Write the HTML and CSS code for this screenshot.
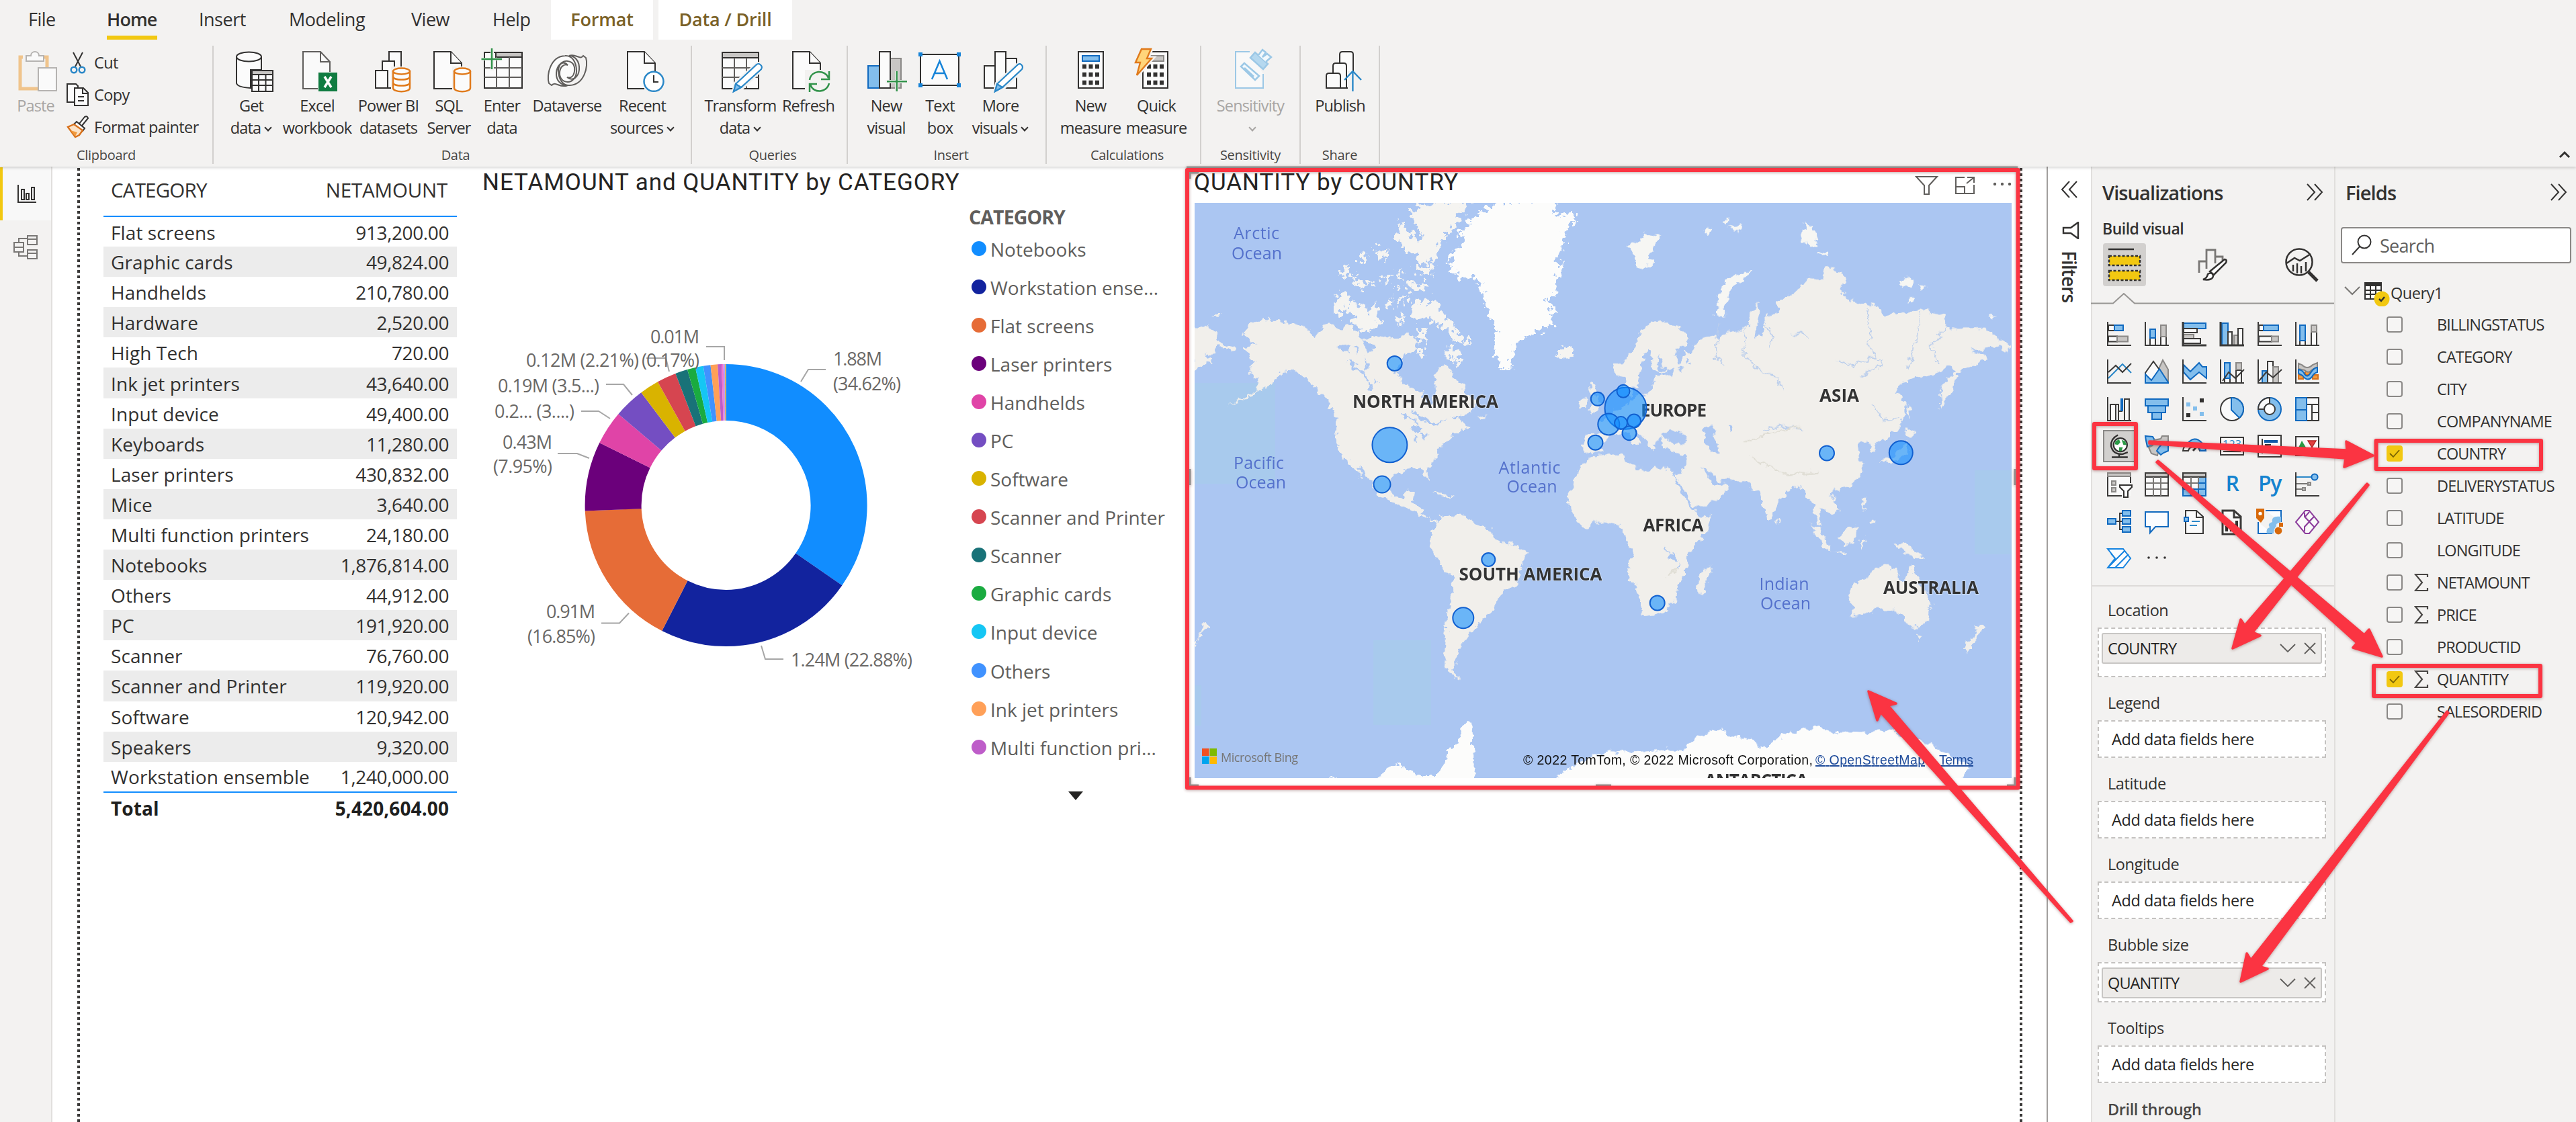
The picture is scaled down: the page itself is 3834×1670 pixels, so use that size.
FILE: index.html
```html
<!DOCTYPE html>
<html lang="en">
<head>
<meta charset="utf-8">
<title>Sales report - Power BI Desktop</title>
<link rel="stylesheet" href="styles.css">
</head>
<body>
<header class="ribbon">
  <nav class="tabs">
    <span class="tab file">File</span><span class="tab home">Home</span><span class="tab insert">Insert</span><span class="tab modeling">Modeling</span><span class="tab view">View</span><span class="tab help">Help</span><span class="tab ctx format">Format</span><span class="tab ctx drill">Data / Drill</span>
  </nav>
  <div class="groups">
    <section class="group g-clip">
      <div class="tools">
        <div class="btn off b-paste">
          <svg class="ri" viewBox="0 0 70 70"><path d="M16 15H12V62H38" stroke="#f0c48c" fill="none" stroke-width="5"/><path d="M46 15H52V30" stroke="#f0c48c" fill="none" stroke-width="5"/><path d="M21 21V13h7c0-8 12-8 12 0h7v8z" fill="#fafafa" stroke="#b5b3b1" stroke-width="2"/><path d="M39 31H66V65H39z" fill="#fafafa" stroke="#b5b3b1" stroke-width="2"/></svg>
          <span>Paste</span>
        </div>
        <div class="clip-list">
          <div class="mini"><svg viewBox="0 0 34 34"><path d="M10 2L21 23M24 2L13 23" class="k n"/><circle cx="11" cy="28" r="4.3" class="bl n"/><circle cx="23" cy="28" r="4.3" class="bl n"/></svg><span>Cut</span></div>
          <div class="mini"><svg viewBox="0 0 34 34"><path d="M1 1H14L17 4V28H1z" class="k"/><path d="M12 7H25L32 14V33H12z" class="k"/><path d="M24 8V15H31M17 20H26M17 26H26" class="k n"/></svg><span>Copy</span></div>
          <div class="mini"><svg viewBox="0 0 34 34"><path d="M19 12L27 2Q31 0 32 4L23 15" class="k"/><path d="M15 9L27 19L24 23L11 13z" class="k"/><path d="M11 13L2 17L13 32L19 29L24 22z" fill="#fbe3c8" stroke="#d8711b" stroke-width="2.4"/><path d="M6 22L16 25L13 31z" fill="#f09a3e"/></svg><span>Format painter</span></div>
        </div>
      </div>
      <div class="gname">Clipboard</div>
    </section>
    <section class="group g-data">
      <div class="tools">
        <div class="btn w92"><svg class="ri" viewBox="0 0 70 70"><path d="M13 14V54Q15 60 34 61V34H50V14" class="k"/><ellipse cx="31.5" cy="14.5" rx="18.5" ry="7" class="k"/><path d="M36 35H67V66H36z" class="k"/><path d="M36 35H67V41H36z" fill="#c8c6c4" class="k2"/><path d="M46 41V66M56.500 41V66M36 49H67M36 57H67" class="k n"/></svg><span>Get<br>data<i class="dn"></i></span></div>
        <div class="btn w104"><svg class="ri" viewBox="0 0 70 70"><path d="M14 7H40L54 22V37H36V62H14z" fill="#fafafa"/><path d="M36 62H14V7H40L54 22V37M40 7V22H54" class="gr n"/><path d="M37 38H65V66H37z" fill="#107c41"/><path d="M46 44L56 60M56 44L46 60" stroke="#fff" stroke-width="3.500" fill="none"/></svg><span>Excel<br>workbook</span></div>
        <div class="btn w108"><svg class="ri" viewBox="0 0 70 70"><path d="M36 7H54V60H36z" class="k"/><path d="M26 21H44V61H26z" class="k"/><path d="M16 35H34V61H16z" class="k"/><path d="M39 29H70V68H39z" fill="#f3f2f1"/><path d="M42 36V61C42 68 67 68 67 61V36" class="or"/><ellipse cx="54.500" cy="36" rx="12.500" ry="4.500" class="or"/><path d="M42 44C42 50 67 50 67 44M42 53C42 59 67 59 67 53" class="or n"/></svg><span>Power BI<br>datasets</span></div>
        <div class="btn w72"><svg class="ri" viewBox="0 0 70 70"><path d="M40 62H13V7H38L54 24V30" class="k"/><path d="M38 7V24H54" class="k"/><path d="M40 29H70V68H40z" fill="#f3f2f1"/><path d="M43 36V61C43 68 67 68 67 61V36" class="or"/><ellipse cx="55" cy="36" rx="12" ry="4.500" class="or"/></svg><span>SQL<br>Server</span></div>
        <div class="btn w86"><svg class="ri" viewBox="0 0 70 70"><path d="M9 8H65V61H9z" class="k"/><path d="M26 8H65V15H26z" fill="#c8c6c4" class="k2"/><path d="M27 15V61M46 15V61M9 31H65M9 45H65" class="gr n"/><path d="M3 16H37V20H3zM18 1H23V35H18z" fill="#f3f2f1"/><path d="M4.500 18H35M20 2V33" class="gn n"/></svg><span>Enter<br>data</span></div>
        <div class="btn w108"><svg class="ri" viewBox="0 0 70 70"><g class="gr"><path d="M8 54C4 42 10 14 32 13C42 12 49 22 49 36C49 46 42 52 36 52C28 52 23 45 24 37C25 28 32 25 36 27C28 18 20 28 19 38C18 50 26 57 36 57C24 62 18 50 12 57z"/><path d="M63 16C67 28 61 56 39 57C29 58 22 48 22 34C23 24 30 20 36 21C44 22 47 28 46 36C45 44 40 47 35 45C44 52 52 44 53 34C54 20 46 13 38 13C48 9 54 20 59 13z" fill="none"/></g></svg><span>Dataverse</span></div>
        <div class="btn w116"><svg class="ri" viewBox="0 0 70 70"><path d="M38 62H13V7H38L54 24V36" class="k"/><path d="M38 7V24H54" class="k"/><circle cx="52" cy="51.300" r="14.500" fill="#fff" stroke="#2b88c8" stroke-width="2.500"/><path d="M52 42V52H59" class="k n"/></svg><span>Recent<br>sources<i class="dn"></i></span></div>
      </div>
      <div class="gname">Data</div>
    </section>
    <section class="group g-query">
      <div class="tools">
        <div class="btn w124"><svg class="ri" viewBox="0 0 70 70"><path d="M8 8H62V62H8z" class="k"/><path d="M8 8H62V16H8z" fill="#c8c6c4" class="k2"/><path d="M26 16V61M44 16V61M8 31H62M8 45H62" class="gr n"/><path d="M25 67L28 54L58 27C62 22 69 28 66 33L37 61z" fill="#fff" stroke="#f3f2f1" stroke-width="6"/><path d="M25 66L28 55L58 27C62 22 69 28 66 33L36 60z" fill="#fff" stroke="#2b88c8" stroke-width="2.200"/><path d="M25 66L28 55L36 60z" fill="#83beec" stroke="#2b88c8" stroke-width="2.200"/></svg><span>Transform<br>data<i class="dn"></i></span></div>
        <div class="btn w78"><svg class="ri" viewBox="0 0 70 70"><path d="M34 62H12V7H37L53 24V34" class="k"/><path d="M37 7V24H53" class="k"/><path d="M30 34H70V70H30z" fill="#f3f2f1"/><path d="M37 49C39 34 60 33 65 46M66 36V48H54M66 54C63 68 43 70 38 56M37 67V55H48" class="gn n"/></svg><span>Refresh</span></div>
      </div>
      <div class="gname">Queries</div>
    </section>
    <section class="group g-ins">
      <div class="tools">
        <div class="btn w88"><svg class="ri" viewBox="0 0 70 70"><path d="M41 17H57V61H41z" fill="#c8c6c4" class="g2"/><path d="M8 28H25V61H8z" fill="#83beec" stroke="#1069bf" stroke-width="2"/><path d="M25 7H41V61H25z" class="k"/><path d="M34 49H68V54H34zM48 36H53V68H48z" fill="#f3f2f1"/><path d="M36 51.300H66M50.700 36V66" class="gn n"/></svg><span>New<br>visual</span></div>
        <div class="btn w72"><svg class="ri" viewBox="0 0 70 70"><path d="M6 11H63V57H6z" class="k"/><path d="M3 8h6v6h-6zM60 8h6v6h-6zM3 54h6v6h-6zM60 54h6v6h-6z" fill="#1583d8"/><path d="M23 48L34.500 21L46 48M27 39H42" stroke="#1583d8" stroke-width="2.500" fill="none"/></svg><span>Text<br>box</span></div>
        <div class="btn w108"><svg class="ri" viewBox="0 0 70 70"><path d="M11 28H27V61H11z" class="k"/><path d="M43 17H59V61H43z" class="k"/><path d="M27 7H43V61H27z" class="k"/><path d="M27 67L30 54L60 27C64 22 71 28 68 33L39 61z" fill="#fff" stroke="#f3f2f1" stroke-width="6"/><path d="M27 66L30 55L60 27C64 22 70 28 67 33L38 60z" fill="#fff" stroke="#2b88c8" stroke-width="2.200"/><path d="M27 66L30 55L38 60z" fill="#83beec" stroke="#2b88c8" stroke-width="2.200"/></svg><span>More<br>visuals<i class="dn"></i></span></div>
      </div>
      <div class="gname">Insert</div>
    </section>
    <section class="group g-calc">
      <div class="tools">
        <div class="btn w108"><svg class="ri" viewBox="0 0 70 70"><path d="M17 7H54V61H17z" class="k"/><path d="M23 13H48V21H23z" fill="#83beec" stroke="#1069bf" stroke-width="2"/><path d="M23 29H48M23 41H48M23 53H48" stroke="#323130" stroke-width="6.500" stroke-dasharray="6 3.500" fill="none"/></svg><span>New<br>measure</span></div>
        <div class="btn w88"><svg class="ri" viewBox="0 0 70 70"><path d="M15 7H52V61H15z" class="k"/><path d="M20 13H46V21H20z" fill="#c8c6c4" class="g2"/><path d="M21 29H46M21 41H46M21 53H46" stroke="#323130" stroke-width="6.500" stroke-dasharray="6 3.500" fill="none"/><path d="M13 3H27L21 17H28L6 42L11 23H4z" fill="#ffd57a" stroke="#f3f2f1" stroke-width="7"/><path d="M13 3H27L21 17H28L6 42L11 23H4z" fill="#ffd57a" stroke="#e07a1b" stroke-width="2.400"/></svg><span>Quick<br>measure</span></div>
      </div>
      <div class="gname">Calculations</div>
    </section>
    <section class="group g-sens">
      <div class="tools">
        <div class="btn off w148"><svg class="ri" viewBox="0 0 70 70"><path d="M34 7H13V61H54V40" fill="#f8f8f8" stroke="#9cc8e6" stroke-width="2"/><g fill="#f3f9fd" stroke="#9cc8e6" stroke-width="2.500"><path d="M26 24L21 29L42 49L48 43z"/><path d="M26 31L40 44"/><path d="M42 8L35 16L54 33L61 25z" fill="#b5d8ef"/><path d="M47 12L53 4L58 8L53 15L60 10L66 15L58 22" /></g></svg><span>Sensitivity<br><i class="dn"></i></span></div>
      </div>
      <div class="gname">Sensitivity</div>
    </section>
    <section class="group g-share">
      <div class="tools">
        <div class="btn w118"><svg class="ri" viewBox="0 0 70 70"><path d="M34 61V11Q34 7 38 7H50Q54 7 54 11V61z" class="k"/><path d="M24 61V28Q24 24 28 24H40Q44 24 44 28V61z" class="k"/><path d="M14 61V43Q14 39 18 39H31Q35 39 35 43V61z" class="k"/><path d="M46 36H62V68H46z" fill="#f3f2f1"/><path d="M44 50V61" class="k n"/><path d="M53.400 66V37M41 49L53.400 36L66 49" stroke="#2b88c8" stroke-width="2.400" fill="none"/></svg><span>Publish</span></div>
      </div>
      <div class="gname">Share</div>
    </section>
    <svg class="collapse" viewBox="0 0 18 12"><path d="M2 10L9 3L16 10" fill="none" stroke="#323130" stroke-width="3"/></svg>
  </div>
</header>

<main class="main">
  <aside class="rail">
    <div class="rail-item on"><svg width="30" height="30" viewBox="0 0 30 30"><path d="M2 1V27H29M7 8h4v15h-4zM14 14h4v9h-4zM22 5h4v18h-4z" fill="none" stroke="#323130" stroke-width="2"/></svg></div>
    <div class="rail-item"><svg width="38" height="38" viewBox="0 0 38 38"><path d="M2 12H16V26H2zM2 19H16M22 2H36V15H22zM22 7H36M22 23H36V36H22zM22 28H36M9 12V6H22M9 26V32H22" fill="none" stroke="#797775" stroke-width="2"/></svg></div>
  </aside>

  <div class="canvas">
    <div class="page">
      <table class="grid">
        <thead><tr><th>CATEGORY</th><th>NETAMOUNT</th></tr></thead>
        <tbody>
        <tr><td>Flat screens</td><td>913,200.00</td></tr>
        <tr><td>Graphic cards</td><td>49,824.00</td></tr>
        <tr><td>Handhelds</td><td>210,780.00</td></tr>
        <tr><td>Hardware</td><td>2,520.00</td></tr>
        <tr><td>High Tech</td><td>720.00</td></tr>
        <tr><td>Ink jet printers</td><td>43,640.00</td></tr>
        <tr><td>Input device</td><td>49,400.00</td></tr>
        <tr><td>Keyboards</td><td>11,280.00</td></tr>
        <tr><td>Laser printers</td><td>430,832.00</td></tr>
        <tr><td>Mice</td><td>3,640.00</td></tr>
        <tr><td>Multi function printers</td><td>24,180.00</td></tr>
        <tr><td>Notebooks</td><td>1,876,814.00</td></tr>
        <tr><td>Others</td><td>44,912.00</td></tr>
        <tr><td>PC</td><td>191,920.00</td></tr>
        <tr><td>Scanner</td><td>76,760.00</td></tr>
        <tr><td>Scanner and Printer</td><td>119,920.00</td></tr>
        <tr><td>Software</td><td>120,942.00</td></tr>
        <tr><td>Speakers</td><td>9,320.00</td></tr>
        <tr><td>Workstation ensemble</td><td>1,240,000.00</td></tr>
        </tbody>
        <tfoot><tr><td>Total</td><td>5,420,604.00</td></tr></tfoot>
      </table>

      <section class="donut">
        <h2 class="vtitle">NETAMOUNT and QUANTITY by CATEGORY</h2>
        <div class="donut-body">
          <svg class="ring" viewBox="719 295 725 745">
            <g transform="rotate(-90 1080.600 752)" fill="none" stroke-width="84">
              <circle cx="1080.600" cy="752" r="168" pathLength="5420604" stroke="#118DFF" stroke-dasharray="1876814 5420604"/>
              <circle cx="1080.600" cy="752" r="168" pathLength="5420604" stroke="#12239E" stroke-dasharray="1240000 5420604" stroke-dashoffset="-1876814"/>
              <circle cx="1080.600" cy="752" r="168" pathLength="5420604" stroke="#E66C37" stroke-dasharray="913200 5420604" stroke-dashoffset="-3116814"/>
              <circle cx="1080.600" cy="752" r="168" pathLength="5420604" stroke="#6B007B" stroke-dasharray="430832 5420604" stroke-dashoffset="-4030014"/>
              <circle cx="1080.600" cy="752" r="168" pathLength="5420604" stroke="#E044A7" stroke-dasharray="210780 5420604" stroke-dashoffset="-4460846"/>
              <circle cx="1080.600" cy="752" r="168" pathLength="5420604" stroke="#744EC2" stroke-dasharray="191920 5420604" stroke-dashoffset="-4671626"/>
              <circle cx="1080.600" cy="752" r="168" pathLength="5420604" stroke="#D9B300" stroke-dasharray="120942 5420604" stroke-dashoffset="-4863546"/>
              <circle cx="1080.600" cy="752" r="168" pathLength="5420604" stroke="#D64550" stroke-dasharray="119920 5420604" stroke-dashoffset="-4984488"/>
              <circle cx="1080.600" cy="752" r="168" pathLength="5420604" stroke="#197278" stroke-dasharray="76760 5420604" stroke-dashoffset="-5104408"/>
              <circle cx="1080.600" cy="752" r="168" pathLength="5420604" stroke="#1AAB40" stroke-dasharray="49824 5420604" stroke-dashoffset="-5181168"/>
              <circle cx="1080.600" cy="752" r="168" pathLength="5420604" stroke="#15C6F4" stroke-dasharray="49400 5420604" stroke-dashoffset="-5230992"/>
              <circle cx="1080.600" cy="752" r="168" pathLength="5420604" stroke="#4092FF" stroke-dasharray="44912 5420604" stroke-dashoffset="-5280392"/>
              <circle cx="1080.600" cy="752" r="168" pathLength="5420604" stroke="#FFA058" stroke-dasharray="43640 5420604" stroke-dashoffset="-5325304"/>
              <circle cx="1080.600" cy="752" r="168" pathLength="5420604" stroke="#BE5DC9" stroke-dasharray="24180 5420604" stroke-dashoffset="-5368944"/>
              <circle cx="1080.600" cy="752" r="168" pathLength="5420604" stroke="#F472D0" stroke-dasharray="11280 5420604" stroke-dashoffset="-5393124"/>
              <circle cx="1080.600" cy="752" r="168" pathLength="5420604" stroke="#B5A1FF" stroke-dasharray="9320 5420604" stroke-dashoffset="-5404404"/>
              <circle cx="1080.600" cy="752" r="168" pathLength="5420604" stroke="#C4A200" stroke-dasharray="3640 5420604" stroke-dashoffset="-5413724"/>
              <circle cx="1080.600" cy="752" r="168" pathLength="5420604" stroke="#FF8080" stroke-dasharray="3240 5420604" stroke-dashoffset="-5417364"/>
            </g>
            <g class="leaders">
              <path d="M1229 550H1203L1192 568M1051 516H1078V536M962 533H991L996 553M902 572H928L941 588M865 612H891L908 623M830 675H859L877 682M895 927.500H922L936 912.500M1166 981H1139L1133 961"/>
            </g>
            <g class="dlabels">
              <text x="1240" y="544" textLength="73">1.88M</text>
              <text x="1240" y="581" textLength="101">(34.62%)</text>
              <text x="1177" y="992" textLength="181">1.24M (22.88%)</text>
              <text x="813" y="920" textLength="73">0.91M</text>
              <text x="785" y="957" textLength="101">(16.85%)</text>
              <text x="748" y="668" textLength="74">0.43M</text>
              <text x="734" y="704" textLength="88">(7.95%)</text>
              <text x="736" y="622" textLength="119">0.2... (3....)</text>
              <text x="741" y="584" textLength="151">0.19M (3.5...)</text>
              <text x="783" y="546" textLength="168">0.12M (2.21%)</text>
              <text x="955" y="546" textLength="86">(0.17%)</text>
              <text x="968" y="511" textLength="73">0.01M</text>
            </g>
          </svg>
          <div class="legend">
            <div class="legend-title">CATEGORY</div>
            <div class="li c1">Notebooks</div>
            <div class="li c2">Workstation ense...</div>
            <div class="li c3">Flat screens</div>
            <div class="li c4">Laser printers</div>
            <div class="li c5">Handhelds</div>
            <div class="li c6">PC</div>
            <div class="li c7">Software</div>
            <div class="li c8">Scanner and Printer</div>
            <div class="li c9">Scanner</div>
            <div class="li c10">Graphic cards</div>
            <div class="li c11">Input device</div>
            <div class="li c12">Others</div>
            <div class="li c13">Ink jet printers</div>
            <div class="li c14">Multi function pri...</div>
            <div class="more"></div>
          </div>
        </div>
      </section>

      <section class="mapvis">
        <div class="map-head">
          <h2 class="vtitle">QUANTITY by COUNTRY</h2>
          <svg class="vis-tools" viewBox="0 0 144 30"><g fill="none" stroke="#605e5c" stroke-width="2"><path d="M2 2H33L21 15V28H14V15z"/><path d="M74 3H61V27H88V14M61 17H74V27M78 3H88V11M88 3L77 12"/></g><g fill="#605e5c"><circle cx="119" cy="13" r="2.200"/><circle cx="130" cy="13" r="2.200"/><circle cx="141" cy="13" r="2.200"/></g></svg>
        </div>
        <svg class="map" viewBox="1778 302 1216 856">
          <defs>
            <filter id="coast" x="0" y="0" width="1" height="1" filterUnits="objectBoundingBox"><feTurbulence type="fractalNoise" baseFrequency="0.09" numOctaves="3" seed="4"/><feDisplacementMap in="SourceGraphic" scale="15" xChannelSelector="R" yChannelSelector="G"/></filter>
            <filter id="fjords" x="0" y="0" width="1" height="1" filterUnits="objectBoundingBox"><feTurbulence type="fractalNoise" baseFrequency="0.12" numOctaves="3" seed="9"/><feDisplacementMap in="SourceGraphic" scale="28" xChannelSelector="R" yChannelSelector="G"/></filter>
          </defs>
          <path d="M1778 302h1216v856h-1216z" fill="#abc6f2"/>
          <path d="M2044 953h86v126h-86zM2939 700h55v125h-55zM1778 570h120v150h-120zM1778 1020h10v60h-10z" fill="#a8caed"/>
          <g filter="url(#coast)">
          <g transform="translate(1750 240) scale(.40816 .60588)" fill="#f1efeb">
            <path d="M245 425L275 402L320 388L380 392L440 398L490 415L500 435L530 412L560 402L600 412L650 405L680 440L720 430L780 435L800 432L850 425L875 445L860 475L830 470L820 500L800 520L830 545L870 562L905 568L910 600L935 600L948 565L945 520L955 505L990 502L1010 530L1040 545L1075 580L1100 605L1055 622L1010 630L1045 640L1072 655L1030 665L990 690L960 705L955 725L925 745L915 760L928 785L905 770L895 752L850 755L800 765L788 780L785 810L800 826L830 830L845 810L868 812L862 840L900 850L895 865L922 880L900 876L870 862L840 850L790 835L740 825L720 800L685 765L665 750L672 780L650 755L610 730L590 700L582 660L585 625L560 605L560 585L525 570L500 550L470 525L430 518L385 520L350 545L325 555L270 580L180 603L300 565L300 545L260 510L290 495L265 470L245 460L290 448L260 432z"/>
            <path d="M950 890L965 870L1000 872L1050 868L1080 885L1110 900L1150 905L1165 930L1200 940L1250 945L1282 965L1260 1000L1240 1040L1195 1055L1170 1075L1160 1100L1140 1115L1120 1120L1105 1140L1075 1155L1060 1170L1035 1195L1025 1225L1010 1250L1032 1275L995 1255L980 1215L985 1170L990 1110L1010 1060L1008 1020L980 1005L950 975L928 945L935 910z"/>
            <path d="M922 872L950 882L950 892zM930 810L965 815L1015 824L970 824zM1100 625L1135 628L1110 635z"/>
            <path d="M60 405L110 405L150 425L170 450L215 455L205 467L150 455L140 470L100 475L135 490L95 505L60 515zM130 378L165 378L150 386zM60 1202L85 1165L110 1130L128 1145L95 1160L75 1185z"/>
            <path d="M735 1530L760 1490L800 1482L860 1500L900 1510L960 1510L970 1490L1000 1440L1030 1430L1040 1390L1082 1378L1085 1530zM1380 1530L1430 1490L1580 1464L1580 1530zM560 1512L600 1515L560 1518z" fill="#fcfcfb"/>
            <g fill="#abc6f2"><path d="M590 455L625 450L635 468L605 468zM645 455L670 460L660 470zM620 490L665 495L650 502zM690 480L700 510L690 520zM860 655L890 650L905 665L880 668zM870 668L880 690L868 690zM895 668L920 670L905 685zM730 530L740 545L725 555zM700 545L720 555L705 565zM860 610L940 640L990 630L940 650L890 632zM680 440L700 470L730 460L700 445z"/></g>
            <path d="M640 500L680 520L700 540M820 620L870 640L900 660" fill="none" stroke="#abc6f2" stroke-width="5"/>
          </g>
          <g transform="translate(2380 240) scale(.43367 .60588)" fill="#f1efeb">
            <path d="M-50 740L-20 725L80 718L95 740L130 755L180 765L190 750L250 760L265 790L300 830L330 860L345 878L388 868L370 905L320 950L300 975L305 1000L275 1040L265 1070L225 1110L160 1118L145 1105L125 1050L100 1010L115 960L85 920L75 895L45 890L0 885L-40 900L-75 885L-110 845L-100 810L-85 785L-75 755z"/>
            <path d="M335 1045L345 1010L385 995L370 1040L355 1065z"/>
            <path d="M-50 680L-55 705L-30 715L0 712L20 690L45 668L75 672L95 665L125 695L138 700L125 670L130 660L165 690L180 712L195 705L190 690L215 680L215 700L240 715L295 720L300 735L280 760L258 768L270 785L300 815L330 852L400 835L450 800L430 792L400 795L385 785L355 755L380 765L410 785L440 780L500 785L525 805L550 810L560 840L585 882L605 865L610 840L650 810L680 795L700 810L715 825L735 840L745 880L765 900L755 870L750 850L790 865L820 860L815 835L790 820L810 810L860 800L890 780L910 745L885 710L890 695L920 690L940 715L955 705L945 690L975 685L1030 655L1050 620L1050 590L1020 570L1040 545L1075 530L1150 530L1200 500L1225 515L1170 560L1175 605L1215 560L1225 520L1290 500L1335 490L1330 475L1280 465L1330 460L1370 450L1400 470L1412 452L1370 435L1330 408L1280 410L1200 410L1180 380L1100 365L1050 370L980 380L950 355L910 350L850 340L830 310L850 295L830 270L780 258L765 290L720 285L670 320L610 350L620 370L570 380L560 430L535 435L550 390L545 350L520 370L515 405L470 415L400 430L340 440L320 470L290 470L280 500L260 470L300 450L315 435L270 405L210 392L160 405L130 440L100 480L55 500L60 530L90 535L95 570L110 575L115 550L130 560L140 500L165 460L185 465L180 510L230 520L260 510L250 525L190 530L185 550L165 575L120 580L90 600L50 615L20 635L-5 640L5 670L-40 672z"/>
            <path d="M-35 545L-20 540L0 590L5 612L-35 617L-20 590zM-68 590L-45 582L-45 607L-66 607zM1060 655L1082 668L1065 680L1055 670zM1055 685L1065 710L1030 735L985 742L960 735L1010 728zM725 890L760 905L795 955L770 945zM798 958L845 962L845 967zM820 925L860 900L885 892L880 935L845 942zM895 930L915 925L900 955zM900 828L918 830L912 855zM925 885L945 878L945 890zM1010 940L1050 935L1085 955L1118 978L1060 965zM855 1060L880 1035L930 1020L950 1000L990 990L1020 1000L1030 1025L1055 1035L1070 990L1085 1020L1110 1050L1145 1085L1130 1125L1100 1145L1060 1140L1045 1115L1000 1100L950 1100L900 1115L870 1118L870 1090zM1083 1163L1108 1165L1098 1182zM1248 1195L1290 1165L1303 1135L1327 1145L1300 1165L1268 1208zM605 880L618 885L610 892zM1055 600L1070 610L1062 640z"/>
            <path d="M400 380L410 330L440 290L522 268L500 290L450 310L430 350L432 386zM90 210L130 200L160 178L212 185L190 210L170 230L192 250L140 268L120 235zM690 180L710 150L735 160L752 215L725 210zM752 225L788 220L782 240zM1028 290L1075 288L1082 310L1040 312zM1100 302L1128 310L1105 313zM1060 335L1075 335L1068 350zM360 172L385 165L380 180zM420 150L445 135L440 155zM440 165L490 155L485 170zM1335 378L1365 378L1350 386z" fill="#f6f6f3"/>
            <path d="M-180 1530L-100 1490L0 1455L100 1450L230 1445L285 1445L330 1420L380 1400L420 1395L450 1410L520 1420L570 1445L610 1420L660 1402L730 1390L800 1400L900 1405L990 1395L1050 1408L1130 1430L1200 1455L1275 1490L1230 1530z" fill="#fcfcfb"/>
            <g fill="#abc6f2"><path d="M215 675L240 655L265 660L305 682L290 692L240 690zM358 660L385 652L410 660L382 670L405 700L410 715L385 715L370 690zM440 650L460 650L450 665zM240 965L260 960L262 975L245 978zM225 945L232 950L245 975L240 978zM270 975L275 1000L268 998zM300 485L320 488L310 498zM270 505L285 512L272 518zM205 480L215 500L240 515L210 512L200 500z"/></g>
            <g fill="none" stroke="#b9cdec" stroke-width="3"><path d="M500 400L498 480L540 510L610 530L630 560M920 360L935 410L920 450L975 500L900 525M820 490L870 500L960 480M1105 370L1090 430L1060 510M1200 400L1140 450L1160 500M660 430L700 420L720 440M410 400L400 480L430 500M570 400L600 430L580 460M940 600L980 640L1030 630M560 660L620 650L700 655"/></g>
            <g fill="none" stroke="#dfddd4" stroke-width="4"><path d="M500 690L600 665L690 650M520 725L580 750L640 770L760 765M230 1020L270 1000"/></g>
          </g>
          </g>
          <g filter="url(#fjords)">
          <g transform="translate(1960 290) scale(.33333)" fill="#f5f4f1">
            <path d="M420 80L470 40L690 20L640 90L620 130L560 200L545 240L520 300L470 310L440 270L400 260L380 220L355 180L370 120L400 150L430 190L480 200L440 130zM430 330L520 318L520 357L440 348zM400 398L490 388L508 420L420 428zM260 235L320 250L315 290L280 265zM190 270L222 262L218 312L188 310zM100 362L140 320L158 345L115 372zM160 365L200 388L252 395L210 427L168 405zM298 360L332 375L312 400zM355 338L385 350L370 375zM345 400L380 415L360 425zM75 500L85 440L140 438L162 460L112 535L80 528zM140 490L170 478L230 520L258 470L272 530L292 572L240 602L200 612L160 572zM310 482L340 460L338 520zM365 462L402 453L380 492zM348 540L388 550L370 592zM420 482L440 460L470 488L490 460L540 480L565 540L605 570L635 620L682 662L612 655L580 605L540 575L490 545L440 562zM450 600L482 600L488 658L455 652zM578 670L642 700L637 752L572 712zM448 700L484 700L470 735zM1072 712L1100 680L1148 690L1122 730L1085 738z"/>
            <path d="M585 275L650 235L655 200L635 170L700 100L770 50L800 20L1050 20L1075 90L1130 80L1165 100L1110 180L1085 240L1070 290L1100 330L1070 380L1065 450L1020 470L1060 520L1050 580L960 620L885 670L865 778L815 782L790 680L800 600L755 520L740 430L700 360L630 375L600 320z" fill="#fcfcfb"/>
          </g>
          </g>
          <path d="M1778 290h1216v12h-1216z" fill="#fff"/>
          <g class="continent">
            <text x="2013" y="606.500" textLength="217">NORTH AMERICA</text>
            <text x="2171.500" y="864" textLength="213">SOUTH AMERICA</text>
            <text x="2442" y="620" textLength="98">EUROPE</text>
            <text x="2708" y="598" textLength="59">ASIA</text>
            <text x="2445.500" y="791" textLength="90">AFRICA</text>
            <text x="2803" y="884" textLength="142">AUSTRALIA</text>
            <text x="2537" y="1171" textLength="154">ANTARCTICA</text>
          </g>
          <g class="ocean">
            <text x="1836" y="356" textLength="68">Arctic</text><text x="1833" y="386" textLength="75">Ocean</text>
            <text x="1836" y="697.500" textLength="75">Pacific</text><text x="1839" y="726.500" textLength="75">Ocean</text>
            <text x="2230.500" y="705" textLength="92">Atlantic</text><text x="2242.500" y="733" textLength="75">Ocean</text>
            <text x="2618.500" y="878" textLength="74">Indian</text><text x="2620" y="907" textLength="75">Ocean</text>
          </g>
          <g class="bubbles">
            <circle cx="2075.700" cy="541" r="11"/><circle cx="2068.400" cy="662.300" r="26"/><circle cx="2057" cy="721" r="12.500"/><circle cx="2215.300" cy="833" r="10"/><circle cx="2177.800" cy="919.800" r="15.500"/><circle cx="2377.800" cy="593.800" r="10"/><circle cx="2374.500" cy="658.700" r="11"/><circle cx="2419.500" cy="607.800" r="31"/><circle cx="2394.300" cy="631.400" r="16"/><circle cx="2416" cy="582.300" r="9.500"/><circle cx="2412.500" cy="629.600" r="9.500"/><circle cx="2432" cy="626.500" r="10"/><circle cx="2425" cy="644.700" r="10.500"/><circle cx="2719" cy="674.400" r="11"/><circle cx="2829.300" cy="673.800" r="17.500"/><circle cx="2466.700" cy="897.400" r="11"/>
          </g>
          <path d="M1789 1114h10.500v11h-10.500z" fill="#f25022"/><path d="M1800.500 1114h10.500v11h-10.500z" fill="#7fba00"/><path d="M1789 1126h10.500v11h-10.500z" fill="#00a4ef"/><path d="M1800.500 1126h10.500v11h-10.500z" fill="#ffb900"/>
          <text class="bing" x="1817" y="1134" textLength="115">Microsoft Bing</text>
          <g class="copy">
            <text x="2267" y="1138" textLength="431">© 2022 TomTom, © 2022 Microsoft Corporation,</text>
            <text class="lnk" x="2702" y="1138" textLength="163">© OpenStreetMap</text>
            <text class="lnk" x="2886" y="1138" textLength="51">Terms</text>
          </g>
        </svg>
      </section>
    </div>
  </div>

  <aside class="filters">
    <svg width="26" height="28" viewBox="0 0 26 28"><path d="M13 2L2 14L13 26M24 2L13 14L24 26" fill="none" stroke="#323130" stroke-width="2"/></svg>
    <svg class="funnel" width="26" height="26" viewBox="0 0 26 26"><path d="M24 1V25L13 17H2V9H13z" fill="none" stroke="#323130" stroke-width="2.400"/></svg>
    <span>Filters</span>
  </aside>

  <aside class="viz">
    <div class="pane-head"><h3>Visualizations</h3><svg width="26" height="28" viewBox="0 0 26 28"><path d="M2 2L13 14L2 26M13 2L24 14L13 26" fill="none" stroke="#323130" stroke-width="2"/></svg></div>
    <div class="build">Build visual</div>
    <div class="modes">
      <span class="mode on"><svg width="64" height="64" viewBox="0 0 64 64"><path d="M8 9H46" stroke="#323130" stroke-width="2.500"/><path d="M9 19H55V33H9zM9 41H55V55H9z" fill="#f2c811" stroke="#323130" stroke-width="2.500" stroke-dasharray="4 2.500"/></svg></span>
      <span class="mode"><svg width="64" height="64" viewBox="0 0 64 64"><path d="M11 44V27H22M22 38V10H35V30M35 20H46V26" fill="none" stroke="#797775" stroke-width="2.800"/><path d="M27 42L49 24Q53 24 51 29L33 47z" fill="#fff" stroke="#323130" stroke-width="2.500"/><path d="M17 54Q23 52 24 46Q30 42 32 48Q32 56 17 54z" fill="#fff" stroke="#323130" stroke-width="2.500"/></svg></span>
      <span class="mode"><svg width="64" height="64" viewBox="0 0 64 64"><circle cx="28" cy="28" r="19.500" fill="none" stroke="#323130" stroke-width="2.500"/><path d="M9 30L21 22L29 26L45 16M19 42V32M25 45V30M31 45V34M38 42V28" fill="none" stroke="#323130" stroke-width="2.500"/><path d="M42 43L55 56" stroke="#323130" stroke-width="5"/></svg></span>
    </div>
    <svg class="notch" viewBox="0 0 362 17"><path d="M0 15.500H33L49 1L65 15.500H362" fill="none" stroke="#979593" stroke-width="2"/></svg>
    <div class="vgrid">
      <svg viewBox="0 0 18 18"><path d="M1 2.500h4.500v4h-4.500z" class="kk"/><path d="M5.500 2.500h6.500v4h-6.500z" class="bb"/><path d="M1 10.700h6.500v4h-6.500z" class="kk"/><path d="M7.500 10.700h8v4h-8z" class="gg"/><path d="M.5 0V17.500H18" class="ax"/></svg>
      <svg viewBox="0 0 18 18"><path d="M4 12h4v5.500h-4z" class="kk"/><path d="M4 5.500h4v6.500h-4z" class="bb"/><path d="M12 11h4v6.500h-4z" class="kk"/><path d="M12 2.500h4v8.500h-4z" class="gg"/><path d="M.5 0V17.500H18" class="ax"/></svg>
      <svg viewBox="0 0 18 18"><path d="M1 1h16.500v4h-16.500z" class="bb"/><path d="M1 5h10v3h-10z" class="kk"/><path d="M1 9.500h7.500v3h-7.500z" class="gg"/><path d="M1 12.500h12.500v3.500h-12.500z" class="kk"/><path d="M.5 0V17.500H18" class="ax th"/></svg>
      <svg viewBox="0 0 18 18"><path d="M1.500 1h4.500v16.500h-4.500z" class="bb"/><path d="M6 7.500h3v10h-3z" class="kk"/><path d="M10.500 10h3v7.500h-3z" class="gg"/><path d="M13.500 5h3.500v12.500h-3.500z" class="kk"/><path d="M.5 0V17.500H18" class="ax th"/></svg>
      <svg viewBox="0 0 18 18"><path d="M1 2.500h3.500v4h-3.500z" class="kk"/><path d="M4.500 2.500h11v4h-11z" class="bb"/><path d="M1 10.700h9.500v4h-9.500z" class="kk"/><path d="M10.500 10.700h5v4h-5z" class="gg"/><path d="M.5 0V17.500H18" class="ax"/></svg>
      <svg viewBox="0 0 18 18"><path d="M3.500 14h4v3.500h-4z" class="kk"/><path d="M3.500 2.500h4v11.500h-4z" class="bb"/><path d="M12 7.500h4v10h-4z" class="kk"/><path d="M12 2.500h4v5h-4z" class="gg"/><path d="M.5 0V17.500H18" class="ax"/></svg>

      <svg viewBox="0 0 18 18"><path d="M1 14L11.500 3.500L18 10" stroke="#2b88c8" fill="none"/><path d="M1 9.500L6.500 4.500L11.500 9.500L18 3" class="ax"/><path d="M.5 0V17.500H18" class="ax"/></svg>
      <svg viewBox="0 0 18 18"><path d="M9 10L13.500 .5L17.500 7.500V17L9 13z" class="gg"/><path d="M.5 17V10L6.500 1.500L12 9V17z" class="kk"/><path d="M.5 17.500V11L5 15.500L11 7L17.500 17V17.500z" class="bb"/></svg>
      <svg viewBox="0 0 18 18"><path d="M1 4L6 9L12.500 2.500L15 5.500H18V14L12.500 9.500L6 15L1 9.500z" class="bb"/><path d="M.5 0V17.500H18" class="ax"/></svg>
      <svg viewBox="0 0 18 18"><path d="M3.500 14h4v3.500h-4zM12 8h4v9.500h-4z" class="kk"/><path d="M3.500 2.500h4v11.500h-4z" class="bb"/><path d="M12 2.500h4v5h-4z" class="gg"/><path d="M2 16L6.500 9.500L11.500 14L18 7.500" class="ax"/><path d="M.5 0V17.500H18" class="ax"/></svg>
      <svg viewBox="0 0 18 18"><path d="M3.500 8.500h4v9h-4z" class="bb"/><path d="M7.500 1.500h4v16h-4z" class="kk"/><path d="M11.500 5.500h4v12h-4z" class="gg"/><path d="M1 16L6.500 9.500L11.500 13.500L18 7.500" class="ax"/><path d="M.5 0V17.500H18" class="ax"/></svg>
      <svg viewBox="0 0 18 18"><path d="M2.500 11.500h3.500v3h-3.500zM13 11.500h4v3h-4zM7.500 8.500h3.500v3h-3.500z" fill="#f09a3e" stroke="#d8711b"/><path d="M2.500 3L5 4Q9 8 13 4L16.500 2.500V6Q13 7 11 9Q9 10 7 8L2.500 7z" class="gg"/><path d="M2.500 7.500Q6 8 7 11Q9 14 11.500 10Q14 6 16.500 6V9.500Q14 10 12.500 13Q9 17 5.500 12L2.500 10.500z" class="bb"/><path d="M.5 0V17.500H18" class="ax"/></svg>

      <svg viewBox="0 0 18 18"><path d="M2.500 5.500h4v12h-4zM6.500 5.500h2v12h-2zM13 1.500h3.500v16h-3.500z" class="kk"/><path d="M8.500 5V10.500H11V1.500" class="ax"/><path d="M11 1V10.500" stroke="#1069bf" stroke-width="2"/><path d="M.5 0V17.500H18" class="ax"/></svg>
      <svg viewBox="0 0 18 18"><path d="M.5 1.500h17v5h-17zM2.500 6.500h13v5h-13zM5.500 11.500h7v5h-7z" class="bb"/></svg>
      <svg viewBox="0 0 18 18"><path d="M13 1h3v3h-3zM3 12h3v3h-3z" fill="#323130"/><path d="M3 4h3v3h-3zM8 7h3v3h-3zM13 11h3v3h-3z" fill="#83beec"/><path d="M.5 0V17.500H18" class="ax"/></svg>
      <svg viewBox="0 0 18 18"><circle cx="9" cy="9" r="8.500" class="kk"/><path d="M8.500 .5A8.500 8.500 0 0 1 14.500 15.500L8.500 9.500z" class="bb"/></svg>
      <svg viewBox="0 0 18 18"><circle cx="9" cy="9" r="8.500" class="bb"/><path d="M.5 9A8.500 8.500 0 0 1 9 .5V5A4 4 0 0 0 5 9z" class="kk" /><circle cx="9" cy="9" r="4" fill="#fff" stroke="#3b3a39"/></svg>
      <svg viewBox="0 0 18 18"><path d="M.5 .5h17v17h-17z" class="kk"/><path d="M8.500 5.500H17.500M12.500 5.500V17.500M12.500 11.500H17" class="ax"/><path d="M.5 .5h8v17h-8zM.5 9.500h8" class="bb"/></svg>

      <span class="sel"><svg viewBox="0 0 24 24"><path d="M11 3Q5 6 5.500 12Q7 19 15 18.500L19 17M12 18.500V21M6 21H19" fill="none" stroke="#323130" stroke-width="1.300"/><circle cx="13" cy="11" r="5.500" fill="#fff" stroke="#323130" stroke-width="1.200"/><path d="M9 8L12 6.500L13 9L11 11L8.500 10.500zM14 7L17 8L18 11L15.500 11zM12 13L15 13L14 16L12 16z" fill="#2a9a46"/></svg></span>
      <svg viewBox="0 0 18 18"><path d="M.5 1L6 1.500L7.500 4L6 8L2 9Q1 5 .5 1z" class="bb"/><path d="M7 4L12 3L13 1L17.500 1V5L11 9L9.500 15.500L5 14L3 9.500L6 8z" class="gg"/><path d="M11 9L14 6L17.500 5V12L14 13.500L12 15L9 12z" class="bb"/></svg>
      <svg viewBox="0 0 18 18"><path d="M.5 12Q1 8 5 6Q9 2 14 6Q17 8 17.500 12H13Q12 8 9 9Q5 9 4.500 12z" class="kk"/><path d="M3.500 7Q9 0 14.500 6Q17 8 17.500 12H13.500Q12 7.500 8 8.500z" class="bb"/><path d="M8 12L11 8.500" class="ax th"/></svg>
      <svg viewBox="0 0 18 18"><path d="M.5 2h17v13h-17z" class="kk"/><path d="M2.500 12.500H15.500" class="ax"/><text x="2" y="10" textLength="14" class="t123">123</text></svg>
      <svg viewBox="0 0 18 18"><path d="M.5 .5h17v16h-17z" class="kk"/><path d="M3.500 3V14M5.500 7.500H10" class="ax"/><path d="M5 5H15" stroke="#0f5aa8" stroke-width="2"/></svg>
      <svg viewBox="0 0 18 18"><path d="M.5 1.500h17v14h-17z" class="kk"/><path d="M2.500 9.500L5 4.500L8 9.500z" fill="#2a9a46"/><path d="M9.500 4.500H15.500L12.500 9.500z" fill="#e04040" stroke="#b02020" stroke-width=".7"/><path d="M3 12H8M11 12H15" class="ax"/></svg>

      <svg viewBox="0 0 18 18"><path d="M.5 .5h17v17h-17z" fill="#fafafa"/><path d="M17.500 8V.5H.5V17.500H11" class="ax"/><path d="M.5 .5h17v2.500h-17zM3.500 6.500h3v3h-3zM3.500 11.500h3v3h-3z" class="gg"/><path d="M9.500 9.500H18.500V11L15.500 14V18.500H12.500V14L9.500 11z" fill="#fff" stroke="#323130"/></svg>
      <svg viewBox="0 0 18 18"><path d="M.5 .5h17v17h-17z" class="kk"/><path d="M.5 .5h17v3h-17z" fill="#c8c6c4" class="kl"/><path d="M6.500 3.500V17.500M12 3.500V17.500M1 8H17M1 12.500H17" class="ax lt"/></svg>
      <svg viewBox="0 0 18 18"><path d="M.5 .5h17v17h-17z" class="kk"/><path d="M12 3.500h5.500v14h-17v-5h11.500z" class="bb"/><path d="M.5 .5h17v3h-17z" fill="#c8c6c4" class="kl"/><path d="M6.500 3.500V12M12 3.500V12M1 8H12" class="ax lt"/><path d="M6.500 12.500V17.500M12 12V17.500M12 8H17.500M12 12.500H17.500" class="bb"/></svg>
      <span class="letter">R</span>
      <span class="letter">Py</span>
      <svg viewBox="0 0 18 18"><path d="M.5 8.500H9M.5 12.500H5" class="ax lt"/><path d="M.5 3.500H13" stroke="#2b88c8"/><path d="M.5 0V17.500H18" class="ax"/><circle cx="14.500" cy="3.500" r="2.300" class="bb"/><path d="M9.500 7.500h2v2h-2zM5.500 11.500h2v2h-2z" class="gg"/></svg>

      <svg viewBox="0 0 18 18"><path d="M6.500 8.500H9.500M11.500 2.500H9.500V14.500H11.500M9.500 8.500H11.500" class="ax"/><path d="M.5 6.500h6v4h-6zM11.500 .5h6v4h-6zM11.500 6.500h6v4h-6zM11.500 12.500h6v4h-6z" class="bb"/></svg>
      <svg viewBox="0 0 18 18"><path d="M.5 1.500H17.500V12.500H8L4 17V12.500H.5z" class="bw"/></svg>
      <svg viewBox="0 0 18 18"><path d="M2.500 .500H10.500L15.500 5V17.500H2.500z" class="kk"/><path d="M10.500 .5V5.500H15.500" class="ax"/><path d="M1.500 5.500h3v3h-3z" class="bb"/><path d="M7 8.500H13M5.500 11.500H11" stroke="#2b88c8"/></svg>
      <svg viewBox="0 0 18 18"><path d="M2 .500H10.500L15.500 5V18H2z" class="kk th"/><path d="M10.500 .5V5.500H15.500" class="ax th"/><path d="M5 12V16M8.500 10V16M12.500 8V16" stroke="#323130" stroke-width="2"/></svg>
      <svg viewBox="0 0 18 18"><path d="M6 .5H17.500V9M.5 9V17.500H11" class="bw"/><path d="M7 17.500Q6 14 9 13Q7 10 11 9Q10 4 17.500 5V9Q13 10 14 12Q12 14 12 17.500z" fill="#83beec"/><path d="M-1-1H5V6L2.500 9.500L-1 6zM16 9.500h3v3h-3z" fill="#d8690a"/><circle cx="2" cy="2.700" r="1.300" fill="#fff"/><circle cx="15.500" cy="15.500" r="2.700" fill="#d8690a"/></svg>
      <svg viewBox="0 0 18 18"><path d="M7.500 .5H10.500L17.500 9L10.500 17.500H7.500L.5 9zM7 2V5L14 12.500M14 5L7 12.500V16M10 9L14 5M7 5.500L10.500 1.500" fill="#fafafa" stroke="#8c3d9c"/></svg>

      <svg viewBox="0 0 18 18"><path d="M.5 1H12L17.500 8L12 15H.5L6 8zM.5 15L13 2.500M6 15L16 5M3 4.500L6 8" class="pw"/></svg>
      <svg viewBox="0 0 18 18"><g fill="#323130"><circle cx="3" cy="7.500" r=".9"/><circle cx="9" cy="7.500" r=".9"/><circle cx="15" cy="7.500" r=".9"/></g></svg>
    </div>
    <div class="wells">
      <label>Location</label>
      <div class="well tall"><div class="pill">COUNTRY<svg width="56" height="20" viewBox="0 0 56 20"><path d="M3 4L14 15L25 4M39 2L55 18M55 2L39 18" fill="none" stroke="#605e5c" stroke-width="1.800"/></svg></div></div>
      <label>Legend</label>
      <div class="well">Add data fields here</div>
      <label>Latitude</label>
      <div class="well">Add data fields here</div>
      <label>Longitude</label>
      <div class="well">Add data fields here</div>
      <label>Bubble size</label>
      <div class="well filled"><div class="pill">QUANTITY<svg width="56" height="20" viewBox="0 0 56 20"><path d="M3 4L14 15L25 4M39 2L55 18M55 2L39 18" fill="none" stroke="#605e5c" stroke-width="1.800"/></svg></div></div>
      <label>Tooltips</label>
      <div class="well">Add data fields here</div>
      <label class="strong">Drill through</label>
    </div>
  </aside>

  <aside class="fields">
    <div class="pane-head"><h3>Fields</h3><svg width="26" height="28" viewBox="0 0 26 28"><path d="M2 2L13 14L2 26M13 2L24 14L13 26" fill="none" stroke="#323130" stroke-width="2"/></svg></div>
    <div class="search"><svg width="30" height="32" viewBox="0 0 30 32"><circle cx="19" cy="11" r="9.500" fill="none" stroke="#323130" stroke-width="2"/><path d="M12 18L1 30" stroke="#323130" stroke-width="2"/></svg>Search</div>
    <div class="query"><svg width="70" height="40" viewBox="0 0 70 40"><path d="M2 11L13 22L24 11" fill="none" stroke="#797775" stroke-width="2"/><path d="M32 5H56V29H32z" fill="#fff" stroke="#323130" stroke-width="2"/><path d="M32 8H56" stroke="#323130" stroke-width="4"/><path d="M40 8V29M48 8V29M32 16H56M32 22H56" stroke="#323130" stroke-width="2"/><circle cx="57" cy="29" r="11.500" fill="#f2c811"/><path d="M53 29L56 32L61 26" fill="none" stroke="#323130" stroke-width="2.500"/></svg>Query1</div>
    <ul class="flist">
      <li><i class="cb"></i><b></b>BILLINGSTATUS</li>
      <li><i class="cb"></i><b></b>CATEGORY</li>
      <li><i class="cb"></i><b></b>CITY</li>
      <li><i class="cb"></i><b></b>COMPANYNAME</li>
      <li><i class="cb on"><svg viewBox="0 0 24 24"><path d="M5 12L10 17L19 7" fill="none" stroke="#7a6404" stroke-width="1.800"/></svg></i><b></b>COUNTRY</li>
      <li><i class="cb"></i><b></b>DELIVERYSTATUS</li>
      <li><i class="cb"></i><b></b>LATITUDE</li>
      <li><i class="cb"></i><b></b>LONGITUDE</li>
      <li><i class="cb"></i><b><svg viewBox="0 0 22 28"><path d="M20 6V2H2L12 14L2 26H20V22" class="sg"/></svg></b>NETAMOUNT</li>
      <li><i class="cb"></i><b><svg viewBox="0 0 22 28"><path d="M20 6V2H2L12 14L2 26H20V22" class="sg"/></svg></b>PRICE</li>
      <li><i class="cb"></i><b></b>PRODUCTID</li>
      <li><i class="cb on"><svg viewBox="0 0 24 24"><path d="M5 12L10 17L19 7" fill="none" stroke="#7a6404" stroke-width="1.800"/></svg></i><b><svg viewBox="0 0 22 28"><path d="M20 6V2H2L12 14L2 26H20V22" class="sg"/></svg></b>QUANTITY</li>
      <li><i class="cb"></i><b></b>SALESORDERID</li>
    </ul>
  </aside>
</main>

<svg class="marks" viewBox="0 0 3834 1670">
  <path d="M1771 266V257H1784M1771 698V722M1771 1157V1169H1784M2375 1169H2398M2987 1169H2999V1157M2999 698V722M1766 249H3003" fill="none" stroke="#8f8d8b" stroke-width="3"/>
  <g fill="none" stroke="#fb3442" stroke-width="6" stroke-linejoin="round">
    <rect x="1767" y="253" width="1236.500" height="919.500"/>
    <rect x="3117" y="631" width="62" height="66"/>
    <rect x="3536.500" y="656" width="245.500" height="42"/>
    <rect x="3533" y="991" width="248" height="45"/>
  </g>
  <g fill="#fb3442" stroke="#fb3442" stroke-width="3.500" stroke-linejoin="round">
    <path d="M3199 657L3493 670L3492 657L3532 678L3489 695L3491 682L3199 660z"/>
    <path d="M3210 688L3508 957L3502 964L3545 977L3526 937L3519 945L3212 686z"/>
    <path d="M3523 720L3341 931L3335 922L3323 965L3364 946L3353 941L3525 722z"/>
    <path d="M3642 1059L3350 1429L3344 1419L3335 1461L3375 1442L3364 1439L3644 1061z"/>
    <path d="M3082 1372L2799 1060L2794 1072L2781 1029L2822 1047L2810 1050L3084 1371z"/>
  </g>
</svg>
</body>
</html>
```
FILE: styles.css
```css
* { box-sizing: border-box; }
body {
  margin: 0;
  width: 3834px;
  height: 1670px;
  overflow: hidden;
  display: flex;
  flex-direction: column;
  font-family: "Open Sans", "Noto Sans", sans-serif;
  font-size: 24px;
  color: #323130;
  background: #fff;
  position: relative;
}
svg { display: block; }
h2, h3 { margin: 0; font-weight: 400; }

/* ribbon */
.ribbon { height: 248px; background: #f3f2f1; flex: none; box-shadow: 0 2px 4px rgba(0,0,0,.16); z-index: 1; }
.tabs { display: flex; height: 59px; font-size: 27px; letter-spacing: -.5px; line-height: 57px; }
.tab { white-space: nowrap; flex: none; }
.file { margin-left: 42px; width: 117px; }
.home { width: 75px; margin-right: 62px; font-weight: 600; border-bottom: 6px solid #f2c811; letter-spacing: -.9px; }
.insert { width: 134px; }
.modeling { width: 182px; }
.view { width: 121px; }
.help { width: 87px; }
.ctx { background: #fff; text-align: center; font-weight: 600; color: #7a6128; letter-spacing: -.2px; }
.format { width: 152px; margin-right: 8px; }
.drill { width: 199px; }
.groups { display: flex; height: 189px; padding-top: 9px; position: relative; }
.group { border-right: 2px solid #d2d0ce; height: 176px; display: flex; flex-direction: column; flex: none; }
.tools { display: flex; height: 154px; }
.gname { text-align: center; font-size: 20px; line-height: 27px; color: #484644; letter-spacing: -.3px; }
.btn { text-align: center; line-height: 33px; white-space: nowrap; letter-spacing: -.85px; font-size: 23.500px; flex: none; display: flex; flex-direction: column; align-items: center; padding-top: 2px; }
.ri { width: 70px; height: 70px; margin-bottom: 1px; }
.off { color: #a8a6a4; }
.g-clip { width: 318px; padding-left: 18px; }
.g-clip .gname { margin-left: -18px; }
.b-paste { width: 70px; }
.clip-list { margin-left: 11px; display: flex; flex-direction: column; padding-top: 1px; }
.mini { display: flex; align-items: center; height: 48px; gap: 7px; font-size: 23.500px; letter-spacing: -.6px; white-space: nowrap; }
.mini svg { width: 34px; height: 34px; }
.g-data { width: 712px; padding-left: 10px; }
.g-query { width: 232px; padding-left: 10px; }
.g-ins { width: 296px; padding-left: 13px; }
.g-calc { width: 230px; padding-left: 11px; }
.g-sens { width: 148px; }
.g-share { width: 118px; }
.w72 { width: 72px; } .w78 { width: 78px; } .w86 { width: 86px; } .w88 { width: 88px; } .w92 { width: 92px; }
.w104 { width: 104px; } .w108 { width: 108px; } .w116 { width: 116px; } .w118 { width: 117px; } .w124 { width: 124px; } .w148 { width: 146px; }
.dn { display: inline-block; width: 8px; height: 8px; border: solid currentColor; border-width: 0 2.500px 2.500px 0; transform: rotate(45deg); margin: 0 2px 5px 7px; }
.collapse { position: absolute; right: 8px; bottom: 12px; width: 18px; height: 12px; }
.k { fill: #fbfbfb; stroke: #323130; stroke-width: 2; }
.k2 { stroke: #323130; stroke-width: 2; }
.g2 { stroke: #8a8886; stroke-width: 2; }
.gr { stroke: #605e5c; stroke-width: 2; fill: #fbfbfb; }
.or { fill: #fbfbfb; stroke: #e07a1b; stroke-width: 2.500; }
.gn { stroke: #31924a; stroke-width: 2.500; }
.bl { stroke: #2b88c8; stroke-width: 2.500; }
.n { fill: none; }

/* main row */
.main { flex: 1; display: flex; min-height: 0; }
.rail { width: 78px; background: #f3f2f1; border-right: 2px solid #e1dfdd; padding-top: 1px; }
.rail-item { height: 79px; display: flex; align-items: center; justify-content: center; }
.rail-item.on { border-left: 4px solid #f2c811; background: #f8f8f8; }
.canvas { width: 2968px; padding-left: 37px; }
.page {
  width: 2895px; height: 100%; display: flex; padding-left: 39px;
  background:
    repeating-linear-gradient(transparent 0 2px, #3b3a39 2px 6px, transparent 6px 8px) left / 4px 100% no-repeat,
    repeating-linear-gradient(transparent 0 2px, #3b3a39 2px 6px, transparent 6px 8px) right / 4px 100% no-repeat;
}

/* table */
.grid { width: 526px; border-collapse: collapse; table-layout: fixed; font-size: 28px; align-self: flex-start; flex: none; color: #323130; white-space: nowrap; }
.grid th { height: 74px; font-size: 29.500px; font-weight: 400; text-align: left; padding: 0 11px 4px; border-bottom: 2px solid #118dff; width: 318px; letter-spacing: -.8px; }
.grid th + th { text-align: right; padding-right: 14px; width: 208px; letter-spacing: -.2px; }
.grid td { height: 45.100px; padding: 1px 11px 0; line-height: 38px; letter-spacing: .1px; }
.grid td + td { text-align: right; letter-spacing: -.4px; padding-right: 12px; }
.grid tbody tr:nth-child(even) { background: #ececec; }
.grid tfoot td { border-top: 2px solid #118dff; font-weight: 700; color: #201f1e; height: 48px; padding-top: 0; }
.grid tfoot td + td { letter-spacing: .1px; }

.vtitle { font-family: Roboto, sans-serif; font-size: 35px; letter-spacing: .950px; line-height: 46px; color: #252423; white-space: nowrap; margin-left: -1px; }

/* donut */
.donut { margin-left: 39px; width: 1045px; flex: none; padding-top: 1px; }
.donut-body { display: flex; }
.ring { width: 725px; height: 745px; flex: none; }
.leaders { fill: none; stroke: #a6a6a6; stroke-width: 2; }
.dlabels { fill: #6a6866; font-size: 27px; }
.legend { padding-top: 10px; color: #605e5c; font-size: 28px; white-space: nowrap; margin-left: -2px; }
.legend-title { height: 37px; line-height: 37px; font-weight: 700; letter-spacing: -.9px; font-size: 28.500px; }
.li { height: 57.100px; display: flex; align-items: center; gap: 6px; margin-left: 4px; letter-spacing: 0; }
.li::before { content: ""; width: 22px; height: 22px; border-radius: 50%; background: var(--c); margin-top: -2px; }
.c1 { --c: #118dff; } .c2 { --c: #12239e; } .c3 { --c: #e66c37; } .c4 { --c: #6b007b; } .c5 { --c: #e044a7; }
.c6 { --c: #744ec2; } .c7 { --c: #d9b300; } .c8 { --c: #d64550; } .c9 { --c: #197278; } .c10 { --c: #1aab40; }
.c11 { --c: #15c6f4; } .c12 { --c: #4092ff; } .c13 { --c: #ffa058; } .c14 { --c: #be5dc9; }
.more { margin: 37px 0 0 148px; width: 0; border: 11px solid transparent; border-top: 13px solid #252423; border-bottom: 0; }

/* map */
.mapvis { width: 1242px; flex: none; padding: 1px 12px 0 14px; }
.map-head { display: flex; justify-content: space-between; height: 53px; }
.vis-tools { width: 144px; height: 30px; margin-top: 12px; }
.map { width: 1216px; height: 856px; }
.continent { font-weight: 700; font-size: 26px; fill: #333; stroke: #fff; stroke-opacity: .4; stroke-width: 2; paint-order: stroke; }
.ocean { font-size: 25px; fill: #5471cc; }
.bubbles { fill: #118dff; fill-opacity: .6; stroke: #1160d0; stroke-width: 2; }
.bing { font-size: 18px; fill: #767676; }
.copy { font-family: "Liberation Sans", Arial, sans-serif; font-size: 19.500px; fill: #111; }
.lnk { fill: #1d4a9a; text-decoration: underline; }

/* filters */
.filters { width: 66px; border-left: 2px solid #a19f9d; display: flex; flex-direction: column; align-items: center; padding-top: 20px; }
.funnel { margin-top: 34px; margin-left: 3px; }
.filters span { writing-mode: vertical-rl; font-weight: 600; font-size: 28px; margin-top: 17px; line-height: 34px; letter-spacing: -.9px; }

/* visualizations */
.viz { width: 362px; background: #f3f2f1; border-left: 2px solid #e1dfdd; flex: none; }
.pane-head { display: flex; justify-content: space-between; align-items: center; height: 76px; padding: 0 16px 0 15px; }
.pane-head h3 { font-size: 29px; font-weight: 600; letter-spacing: -.9px; }
.build { font-size: 23px; font-weight: 600; letter-spacing: -.5px; padding-left: 15px; line-height: 32px; height: 38px; }
.modes { display: flex; justify-content: space-between; padding: 0 16px 0 16px; height: 74px; }
.mode { width: 64px; height: 64px; border-radius: 4px; }
.mode.on { background: #d2d0ce; }
.notch { width: 362px; height: 17px; margin: 0 0 0 -2px; }
.vgrid { display: grid; grid-template-columns: repeat(6, 36px); grid-auto-rows: 36px; gap: 20px; padding: 26px 0 0 22px; height: 420px; border-bottom: 2px solid #dddbd9; }
.vgrid svg { width: 36px; height: 36px; overflow: visible; }
.ax { fill: none; stroke: #3b3a39; stroke-width: 1; }
.kk { fill: #fafafa; stroke: #3b3a39; stroke-width: 1; }
.kl { stroke: #3b3a39; stroke-width: 1; }
.bb { fill: #83beec; stroke: #1069bf; stroke-width: 1; }
.gg { fill: #c8c6c4; stroke: #8a8886; stroke-width: 1; }
.bw { fill: #fafcff; stroke: #1069bf; stroke-width: 1; }
.pw { fill: #fafcff; stroke: #1583e0; stroke-width: 1; }
.th { stroke-width: 1.500; }
.lt { stroke: #797775; }
.t123 { font-size: 8px; fill: #2b88c8; }
.sel { width: 48px; height: 48px; margin: -7px 0 0 -6px; background: #d2d0ce; border: 2px solid #8a8886; }
.vgrid .sel svg { width: 44px; height: 44px; }
.letter { font-weight: 600; font-size: 32px; line-height: 32px; color: #1583cf; text-align: center; letter-spacing: -1.500px; }
.wells { padding: 17px 12px 0 8px; display: flex; flex-direction: column; font-size: 23.500px; letter-spacing: -.4px; }
.wells label { height: 44px; line-height: 36px; padding-left: 15px; }
.wells label.strong { font-weight: 600; margin-top: 1px; color: #484644; }
.well { background: #fff; border: 2px dashed #c4c2c0; height: 56px; margin-bottom: 20px; line-height: 52px; padding-left: 19px; color: #252423; }
.well.tall { height: 74px; padding: 6px 4px; }
.well.filled { height: 60px; padding: 6px 4px; }
.well.filled, .well.tall { line-height: 42px; }
.pill { height: 46px; border: 2px solid #c8c6c4; border-radius: 3px; background: #edebe9; padding: 0 7px 0 7px; display: flex; justify-content: space-between; align-items: center; letter-spacing: -.9px; }

/* fields */
.fields { flex: 1; background: #f3f2f1; border-left: 2px solid #e1dfdd; }
.fields .pane-head { padding: 0 13px 0 15px; }
.search { margin: 14px 7px 0 8px; height: 54px; background: #fff; border: 2px solid #8a8886; border-radius: 4px; display: flex; align-items: center; gap: 12px; padding-left: 14px; font-size: 27px; letter-spacing: -.7px; color: #605e5c; }
.query { display: flex; align-items: center; gap: 0; padding-left: 12px; height: 60px; margin-top: 14px; font-size: 23.500px; letter-spacing: -.5px; }
.flist { list-style: none; margin: -7px 0 0; padding: 0; font-size: 23.500px; letter-spacing: -.9px; }
.flist li { height: 48px; display: flex; align-items: center; padding-left: 76px; white-space: nowrap; }
.cb { width: 24px; height: 24px; border: 2px solid #8a8886; border-radius: 4px; margin-right: 17px; background: #f6f5f4; flex: none; }
.cb.on { background: #f2c811; border: 0; }
.flist b { width: 22px; margin-right: 12px; flex: none; }
.sg { fill: none; stroke: #484644; stroke-width: 2.200; }

/* call-outs drawn over the window */
.marks { position: absolute; left: 0; top: 0; width: 3834px; height: 1670px; z-index: 2; filter: drop-shadow(0 1px 2px rgba(80,0,0,.35)); }
```
